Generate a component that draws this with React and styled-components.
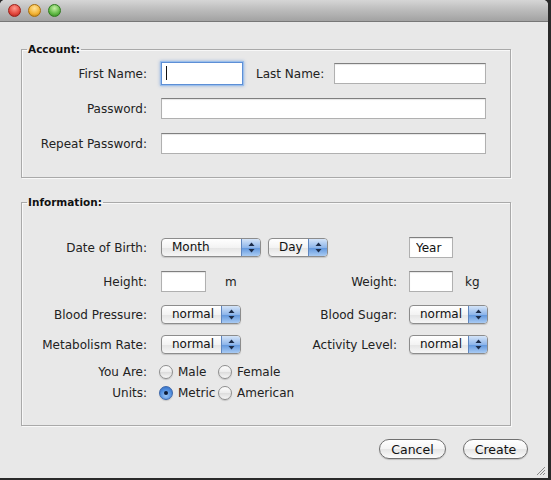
import React from "react";
import styled, { createGlobalStyle } from "styled-components";

const Global = createGlobalStyle`
  html, body {
    margin: 0;
    padding: 0;
    background: #2a2a2a;
  }
  body {
    font-family: "DejaVu Sans", "Liberation Sans", sans-serif;
    font-size: 12px;
    color: #222;
  }
`;

const Window = styled.div`
  position: relative;
  width: 548px;
  height: 478px;
  background: #e8e8e8;
  border-radius: 5px 5px 0 0;
  overflow: hidden;
  display: flex;
  flex-direction: column;
`;

const TitleBar = styled.div`
  height: 22px;
  box-sizing: border-box;
  flex-shrink: 0;
  display: flex;
  align-items: center;
  gap: 7px;
  padding: 0 0 1px 8px;
  background: linear-gradient(#d6d6d6, #bdbdbd 45%, #a2a2a2);
  border-bottom: 1px solid #777;
`;

const lightColors = {
  red: ["#ff9a8e", "#e2463b", "#9c1f17"],
  yellow: ["#ffe49a", "#f2b233", "#a86f0c"],
  green: ["#c6f0a6", "#5fb844", "#2e7a1e"],
};

const Light = styled.span`
  width: 13px;
  height: 13px;
  border-radius: 50%;
  box-sizing: border-box;
  border: 1px solid ${(p) => lightColors[p.$color][2]};
  background: radial-gradient(
    circle at 50% 30%,
    ${(p) => lightColors[p.$color][0]} 0%,
    ${(p) => lightColors[p.$color][1]} 60%,
    ${(p) => lightColors[p.$color][2]} 100%
  );
`;

const Content = styled.div`
  flex: 1;
  padding: 20px 0 0 21px;
  display: flex;
  flex-direction: column;
`;

const Group = styled.fieldset`
  margin: ${(p) => p.$top || 0}px 0 0 0;
  padding: 0;
  width: 490px;
  min-width: 0;
  box-sizing: border-box;
  border: 1px solid #a9a9a9;
  box-shadow: 1px 1px 0 #f8f8f8, inset 1px 1px 0 #f8f8f8;
`;

const Legend = styled.legend`
  margin-left: 5px;
  padding: 0 1px;
  font-weight: bold;
  font-size: 10.5px;
  line-height: 14px;
  color: #111;
`;

const GroupBody = styled.div`
  padding: ${(p) => p.$pad};
  display: flex;
  flex-direction: column;
`;

const Row = styled.div`
  display: flex;
  align-items: center;
  height: ${(p) => p.$h || 21}px;
  margin-top: ${(p) => p.$top || 0}px;
`;

const Label = styled.label`
  width: 125px;
  margin-right: 14px;
  flex-shrink: 0;
  text-align: right;
  white-space: nowrap;
`;

const SideLabel = styled.label`
  width: ${(p) => (p.$w ? `${p.$w}px` : "auto")};
  margin: 0 ${(p) => p.$right || 12}px 0 ${(p) => p.$left || 0}px;
  flex-shrink: 0;
  display: flex;
  justify-content: flex-end;
  white-space: nowrap;
`;

const Mid = styled.div`
  width: ${(p) => p.$w}px;
  flex-shrink: 0;
  display: flex;
  align-items: center;
  gap: 7px;
`;

const TextInput = styled.input`
  width: ${(p) => (p.$w ? `${p.$w}px` : "auto")};
  flex: ${(p) => (p.$w ? "none" : 1)};
  min-width: 0;
  height: 21px;
  box-sizing: border-box;
  margin: 0;
  padding: 0 6px;
  font: inherit;
  color: #111;
  background: #fff;
  border: 1px solid #b0b0b0;
  border-top-color: #7f7f7f;
  box-shadow: inset 0 1px 1px rgba(0, 0, 0, 0.1);
  outline: none;
`;

const FocusField = styled.div`
  position: relative;
  width: 82px;
  height: 23px;
  flex-shrink: 0;
  display: flex;

  input {
    width: 100%;
    height: 100%;
    border: 1px solid #5d8fd6;
    box-shadow: 0 0 0 1px #9cbfeb, 0 0 3px 1px rgba(90, 140, 215, 0.6);
  }
`;

const Caret = styled.span`
  position: absolute;
  left: 5px;
  top: 4px;
  width: 1px;
  height: 14px;
  background: #111;
`;

const Unit = styled.span`
  margin-left: 12px;
`;

const SelectBox = styled.button`
  width: ${(p) => p.$w}px;
  height: 19px;
  flex-shrink: 0;
  box-sizing: border-box;
  margin: 0;
  padding: 0;
  display: flex;
  align-items: stretch;
  font: inherit;
  color: #111;
  border: 1px solid #8c8c8c;
  border-radius: 4px;
  overflow: hidden;
  background: linear-gradient(#ffffff, #f3f3f3 50%, #e4e4e4 51%, #f6f6f6);
  box-shadow: 0 1px 1px rgba(0, 0, 0, 0.15);
`;

const SelectText = styled.span`
  flex: 1;
  text-align: left;
  padding-left: 10px;
  line-height: 17px;
`;

const ArrowCap = styled.span`
  width: 18px;
  display: flex;
  align-items: center;
  justify-content: center;
  border-left: 1px solid #5f86bf;
  background: linear-gradient(#d4e4f8, #8fb6ea 50%, #5f95dc 51%, #a9cbf3);
`;

const Select = ({ w, children }) => (
  <SelectBox $w={w} type="button">
    <SelectText>{children}</SelectText>
    <ArrowCap>
      <svg width="7" height="11" viewBox="0 0 7 11">
        <path d="M3.5 0.5 L6.5 4 L0.5 4 Z" fill="#1b2b48" />
        <path d="M3.5 10.5 L6.5 7 L0.5 7 Z" fill="#1b2b48" />
      </svg>
    </ArrowCap>
  </SelectBox>
);

const RadioGroup = styled.div`
  display: grid;
  grid-template-columns: 59px auto;
  margin-left: -2px;
`;

const RadioOption = styled.label`
  display: flex;
  align-items: center;
  gap: 5px;
  white-space: nowrap;
`;

const RadioDot = styled.span`
  width: 14px;
  height: 14px;
  box-sizing: border-box;
  border-radius: 50%;
  flex-shrink: 0;
  display: flex;
  align-items: center;
  justify-content: center;
  border: 1px solid ${(p) => (p.$on ? "#3b66aa" : "#8e8e8e")};
  background: ${(p) =>
    p.$on
      ? "radial-gradient(circle at 50% 70%, #9cc6f5 0%, #4f8ddd 55%, #2e67bf 100%)"
      : "linear-gradient(#fdfdfd, #ececec 50%, #dcdcdc 51%, #f7f7f7)"};
  box-shadow: 0 1px 1px rgba(0, 0, 0, 0.15);

  &::after {
    content: "";
    display: ${(p) => (p.$on ? "block" : "none")};
    width: 4px;
    height: 4px;
    border-radius: 50%;
    background: #0d1a33;
  }
`;

const Radio = ({ on, children }) => (
  <RadioOption>
    <RadioDot $on={on} />
    {children}
  </RadioOption>
);

const ButtonRow = styled.div`
  display: flex;
  justify-content: flex-end;
  gap: 17px;
  margin-top: 13px;
  padding-right: 20px;
`;

const PillButton = styled.button`
  width: ${(p) => p.$w}px;
  height: 20px;
  box-sizing: border-box;
  margin: 0;
  padding: 0;
  font: inherit;
  font-size: 12.5px;
  color: #111;
  border: 1px solid #707070;
  border-radius: 10px;
  background: linear-gradient(#ffffff, #f4f4f4 50%, #e5e5e5 51%, #fbfbfb);
  box-shadow: 0 1px 1px rgba(0, 0, 0, 0.18);
`;

const Grip = styled.svg`
  position: absolute;
  right: 2px;
  bottom: 2px;
`;

export default function App() {
  return (
    <>
      <Global />
      <Window>
        <TitleBar>
          <Light $color="red" />
          <Light $color="yellow" />
          <Light $color="green" />
        </TitleBar>
        <Content>
          <Group>
            <Legend>Account:</Legend>
            <GroupBody $pad="7px 24px 23px 0">
              <Row>
                <Label>First Name:</Label>
                <FocusField>
                  <TextInput readOnly />
                  <Caret />
                </FocusField>
                <SideLabel $left={13} $right={10}>
                  Last Name:
                </SideLabel>
                <TextInput readOnly />
              </Row>
              <Row $top={14}>
                <Label>Password:</Label>
                <TextInput type="password" readOnly />
              </Row>
              <Row $top={14}>
                <Label>Repeat Password:</Label>
                <TextInput type="password" readOnly />
              </Row>
            </GroupBody>
          </Group>

          <Group $top={17}>
            <Legend>Information:</Legend>
            <GroupBody $pad="28px 0 24px 0">
              <Row>
                <Label>Date of Birth:</Label>
                <Mid $w={248}>
                  <Select w={100}>Month</Select>
                  <Select w={60}>Day</Select>
                </Mid>
                <TextInput $w={44} readOnly value="Year" />
              </Row>
              <Row $top={13}>
                <Label>Height:</Label>
                <Mid $w={150}>
                  <TextInput $w={45} readOnly />
                  <Unit>m</Unit>
                </Mid>
                <SideLabel $w={86}>Weight:</SideLabel>
                <TextInput $w={44} readOnly />
                <Unit>kg</Unit>
              </Row>
              <Row $top={13} $h={19}>
                <Label>Blood Pressure:</Label>
                <Mid $w={150}>
                  <Select w={80}>normal</Select>
                </Mid>
                <SideLabel $w={86}>Blood Sugar:</SideLabel>
                <Select w={79}>normal</Select>
              </Row>
              <Row $top={11} $h={19}>
                <Label>Metabolism Rate:</Label>
                <Mid $w={150}>
                  <Select w={80}>normal</Select>
                </Mid>
                <SideLabel $w={86}>Activity Level:</SideLabel>
                <Select w={79}>normal</Select>
              </Row>
              <Row $top={10} $h={16}>
                <Label>You Are:</Label>
                <RadioGroup>
                  <Radio>Male</Radio>
                  <Radio>Female</Radio>
                </RadioGroup>
              </Row>
              <Row $top={5} $h={16}>
                <Label>Units:</Label>
                <RadioGroup>
                  <Radio on>Metric</Radio>
                  <Radio>American</Radio>
                </RadioGroup>
              </Row>
            </GroupBody>
          </Group>

          <ButtonRow>
            <PillButton $w={67}>Cancel</PillButton>
            <PillButton $w={65}>Create</PillButton>
          </ButtonRow>
        </Content>
        <Grip width="10" height="10" viewBox="0 0 10 10">
          <path d="M9 1 L1 9 M9 4 L4 9 M9 7 L7 9" stroke="#8a8a8a" strokeWidth="1" />
        </Grip>
      </Window>
    </>
  );
}
